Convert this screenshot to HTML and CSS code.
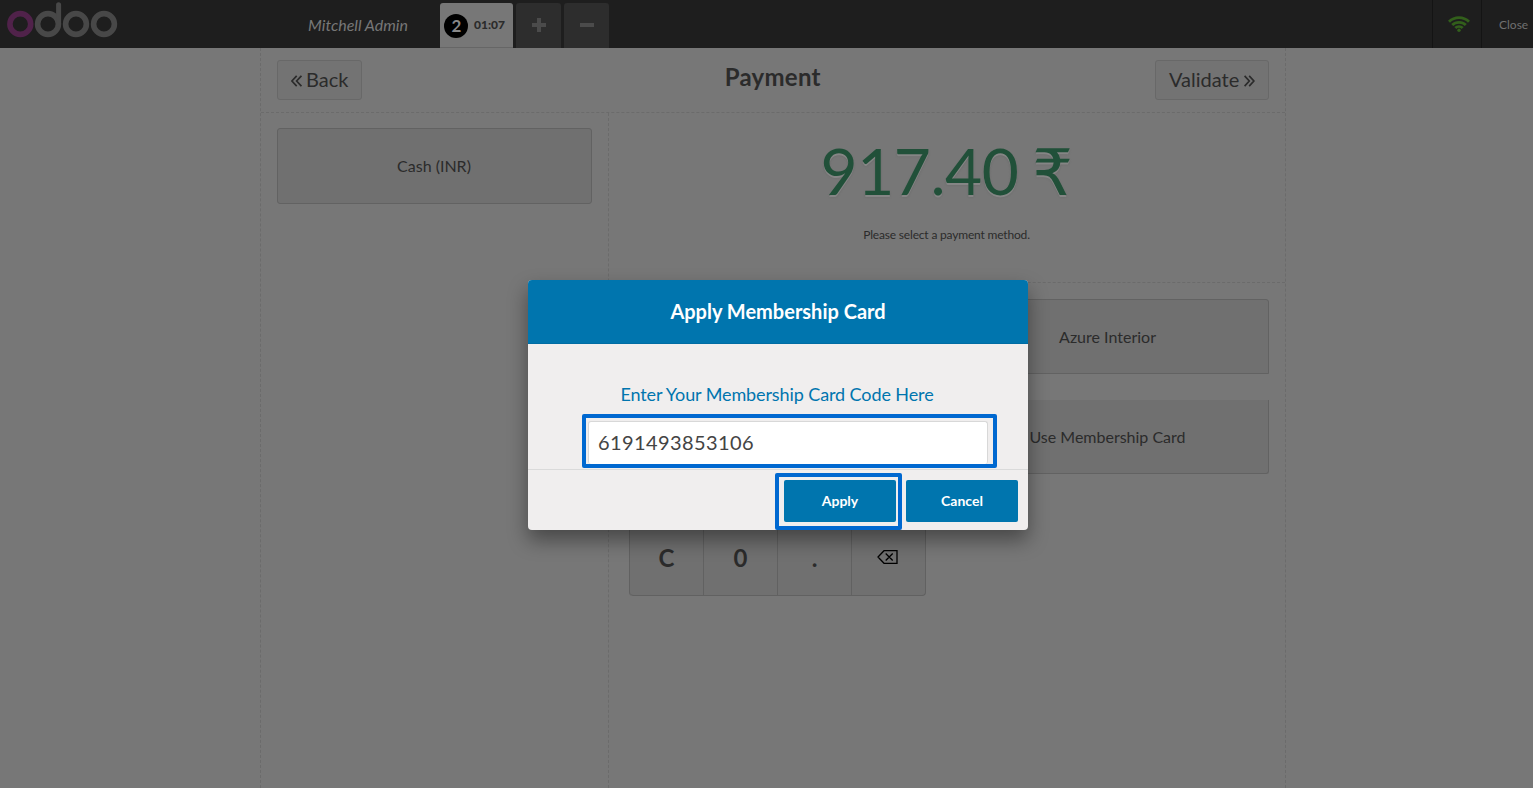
FILE: index.html
```
<!DOCTYPE html>
<html lang="en">
<head>
<meta charset="utf-8">
<title>Point of Sale</title>
<link rel="stylesheet" href="styles.css">
</head>
<body>
<div class="pos">
  <header class="topbar">
    <div class="brand">
      <svg class="logo" width="112" height="40" viewBox="0 0 112 40" fill="none" stroke="#484848" stroke-width="5.6">
        <circle cx="14.3" cy="24" r="10.4" stroke="#50224a"/>
        <circle cx="42" cy="24" r="10.4"/>
        <path d="M52.6 24V4.7" stroke-width="5" stroke-linecap="round"/>
        <circle cx="70" cy="24" r="10.4"/>
        <circle cx="98" cy="24" r="10.4"/>
      </svg>
      <span class="username">Mitchell Admin</span>
    </div>
    <div class="orders">
      <div class="order selected"><span class="sequence">2</span><span class="time">01:07</span></div>
      <div class="order square"><svg width="16" height="16" viewBox="0 0 16 16"><path d="M6 1h4v5h5v4h-5v5H6v-5H1V6h5z"/></svg></div>
      <div class="order square"><svg width="16" height="16" viewBox="0 0 16 16"><path d="M1 6h14v4H1z"/></svg></div>
    </div>
    <div class="status">
      <svg width="22" height="16" viewBox="0 0 22 16" fill="none" stroke="#325f1b" stroke-width="2.8">
        <path d="M1 5.7A14.2 14.2 0 0 1 21 5.7"/>
        <path d="M4.2 9.1A9.7 9.7 0 0 1 17.8 9.1"/>
        <path d="M7.3 12.1A5.3 5.3 0 0 1 14.7 12.1"/>
        <circle cx="11" cy="14.2" r="1.7" fill="#325f1b" stroke="none"/>
      </svg>
    </div>
    <div class="close">Close</div>
  </header>
  <main class="screen">
    <div class="screen-head">
      <div class="nav-button"><svg width="11" height="12" viewBox="0 0 11 12"><path d="M5.7 .8L.9 6l4.8 5.2M10.4 .8L5.6 6l4.8 5.2"/></svg><span>Back</span></div>
      <h1>Payment</h1>
      <div class="nav-button validate"><span>Validate</span><svg width="11" height="12" viewBox="0 0 11 12"><path d="M.6 .8L5.4 6 .6 11.2M5.3 .8L10.1 6l-4.8 5.2"/></svg></div>
    </div>
    <div class="columns">
      <section class="methods"><div class="button cash">Cash (INR)</div></section>
      <section class="right">
        <div class="due">
          <div class="total">917.40 <span class="currency">₹</span></div>
          <div class="message">Please select a payment method.</div>
        </div>
        <div class="controls">
          <div class="numpad">
            <b></b><b></b><b></b><b></b>
            <b></b><b></b><b></b><b></b>
            <b></b><b></b><b></b><b></b>
            <b>C</b><b>0</b><b>.</b>
            <b><svg width="21" height="14" viewBox="0 0 21 14" fill="none" stroke="#000" stroke-width="1.3"><path d="M7 .7h13v12.6H7L1 7zM8.7 3.5l7 7M15.7 3.5l-7 7"/></svg></b>
          </div>
          <div class="actions">
            <div class="button customer">Azure Interior</div>
            <div class="button membership">Use Membership Card</div>
          </div>
        </div>
      </section>
    </div>
  </main>
  <div class="popup">
    <h2>Apply Membership Card</h2>
    <div class="popup-body">
      <label>Enter Your Membership Card Code Here</label>
      <div class="field-mark"><div class="field">6191493853106</div></div>
    </div>
    <footer>
      <div class="apply-mark"><div class="action">Apply</div></div>
      <div class="action">Cancel</div>
    </footer>
  </div>
</div>
</body>
</html>
```
FILE: styles.css
```
* { box-sizing: border-box; }
body { margin: 0; font-family: Lato, "Liberation Sans", sans-serif; color: #2b2b2b; }
.pos { position: relative; display: flex; flex-direction: column; height: 788px; background: #777; overflow: hidden; }
.topbar { display: flex; height: 48px; flex: none; background: #1e1e1e; }
.brand { display: flex; width: 440px; justify-content: space-between; padding: 0 32px 0 6px; }
.logo { flex: none; }
.username { font-size: 16px; font-style: italic; line-height: 49px; color: #777; }
.orders { display: flex; flex: 1; gap: 3px; padding-top: 3px; }
.order { display: flex; align-items: center; height: 45px; border-radius: 3px 3px 0 0; }
.selected { width: 73px; padding: 1px 0 0 4px; gap: 6px; background: #777; border-bottom: 1px solid #666; }
.sequence { width: 24px; height: 24px; padding-left: 1px; border-radius: 50%; background: #000; color: #888; font-size: 17px; font-weight: 700; line-height: 24px; text-align: center; }
.time { font-size: 12px; font-weight: 900; line-height: 20px; margin-top: -1px; }
.square { width: 45px; justify-content: center; background: #2d2d2d; fill: #4b4b4b; }
.square svg { display: block; margin-top: -1px; }
.status { display: flex; width: 50px; justify-content: center; padding: 16px 0 0 4px; border: solid #141414; border-width: 0 1px; }
.close { width: 51px; padding-left: 17px; font-size: 12px; line-height: 50px; color: #707070; }
.screen { display: flex; flex-direction: column; flex: 1; width: 1026px; margin-left: 260px; border: dashed #6b6b6b; border-width: 0 1px; }
.screen-head { display: flex; height: 65px; justify-content: space-between; align-items: flex-start; padding: 12px 16px; border-bottom: 1px dashed #6b6b6b; }
h1 { margin: 0 0 0 28px; font-size: 24px; line-height: 34px; letter-spacing: .25px; }
.nav-button { display: flex; height: 40px; align-items: center; gap: 4px; padding: 0 13px; border: 1px solid #686868; border-radius: 3px; background: #737373; font-size: 20px; }
.nav-button span { line-height: 24px; margin-top: -2px; }
.validate { width: 114px; gap: 5px; }
.nav-button svg { fill: none; stroke: #2b2b2b; stroke-width: 1.7; margin-top: 1px; }
.columns { display: flex; flex: 1; }
.methods { width: 348px; padding: 15px 16px; border-right: 1px dashed #6b6b6b; }
.button { display: flex; height: 76px; align-items: center; justify-content: center; padding-right: 1px; border: 1px solid #626262; border-radius: 3px; background: #707070; font-size: 16px; }
.cash { padding-bottom: 2px; }
.right { flex: 1; }
.due { height: 170px; padding-top: 18px; padding-right: 1px; border-bottom: 1px dashed #6b6b6b; text-align: center; }
.total { height: 80px; font-size: 64px; line-height: 80px; letter-spacing: -.5px; word-spacing: -2px; color: #215039; text-shadow: 0 2px #858585, 0 2px 2px #666; }
.currency { font-family: "DejaVu Sans", sans-serif; line-height: 1; }
.message { margin-top: 16px; font-size: 12px; line-height: 16px; letter-spacing: -.18px; }
.controls { display: flex; gap: 21px; padding: 16px 16px 0 20px; }
.numpad { display: grid; grid-template-columns: repeat(4, 74px); grid-auto-rows: 74px; width: 297px; border: solid #616161; border-width: 1px 0 0 1px; border-radius: 4px; }
.numpad b { display: flex; align-items: center; justify-content: center; padding-bottom: 2px; border: solid #616161; border-width: 0 1px 1px 0; background: #707070; font-size: 24px; }
.numpad b:nth-child(13) { border-radius: 0 0 0 4px; }
.numpad b:last-child { border-radius: 0 0 4px; padding: 0 2px 4px 0; }
.actions { display: flex; flex: 1; flex-direction: column; gap: 26px; }
.customer { height: 75px; border-radius: 3px 3px 0 0; }
.membership { height: 74px; border-top: 0; border-radius: 0 0 3px 3px; }
.popup { position: absolute; left: 528px; top: 280px; width: 500px; height: 250px; border-radius: 4px; background: #f0eeee; box-shadow: 0 10px 20px rgba(0,0,0,.4); }
h2 { height: 64px; margin: 0; border-radius: 4px 4px 0 0; background: #0075ae; border-bottom: 1px solid #006ca3; color: #fff; font-size: 20px; line-height: 63px; text-align: center; }
.popup-body { height: 126px; padding: 38px 31px 0 54px; border-bottom: 1px solid #dadada; }
label { display: block; height: 32px; margin: 0 -30px 0 -55px; font-size: 18px; line-height: 24px; letter-spacing: -.1px; text-align: center; color: #0075ae; }
.field-mark { height: 54px; padding: 3px 5px 0 2px; border: 4px solid #0068d0; border-radius: 2px; }
.field { height: 43px; padding-left: 9px; border: 1px solid #d8d8d8; border-bottom: 0; border-radius: 3px; background: #fff; color: #444; font-size: 20px; line-height: 41px; letter-spacing: .4px; }
footer { display: flex; gap: 4px; padding: 3px 10px 0 247px; }
.apply-mark { width: 127px; height: 57px; flex: none; padding: 3px 2px 0 5px; border: 4px solid #0068d0; border-radius: 2px; }
.action { width: 112px; height: 42px; border-radius: 2px; background: #0075ae; color: #fff; font-size: 14px; font-weight: 700; line-height: 42px; text-align: center; }
footer > .action { margin-top: 7px; }
```
